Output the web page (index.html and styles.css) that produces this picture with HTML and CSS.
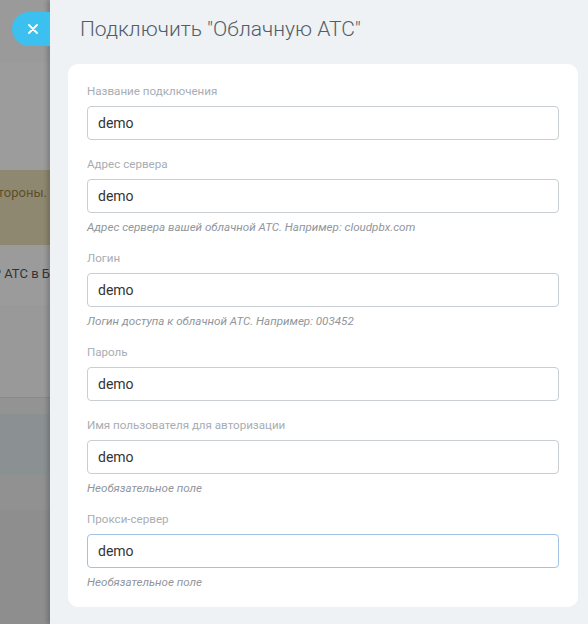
FILE: index.html
```html
<!DOCTYPE html>
<html lang="ru">
<head>
<meta charset="utf-8">
<title>Подключить "Облачную АТС"</title>
<link rel="stylesheet" href="styles.css">
</head>
<body>
<div class="page">
  <div class="backdrop">
    <div class="bd-top"></div>
    <div class="bd-a"></div>
    <div class="bd-alert"><span class="bd-alert-text">тороны.</span></div>
    <div class="bd-b"><span class="bd-text">IP АТС в Б</span></div>
    <div class="bd-c"></div>
    <div class="bd-line"></div>
    <div class="bd-d"></div>
    <div class="bd-e"></div>
    <div class="bd-f"></div>
    <div class="bd-g"></div>
  </div>
  <div class="panel">
    <button class="close" type="button" aria-label="Закрыть">
      <svg width="10" height="10" viewBox="0 0 10 10"><path d="M1 1L9 9M9 1L1 9" stroke="#fff" stroke-width="1.8" stroke-linecap="round"/></svg>
    </button>
    <h1 class="title">Подключить "Облачную АТС"</h1>
    <form class="card">
      <div class="field">
        <label class="label">Название подключения</label>
        <div class="input">demo</div>
      </div>
      <div class="field field-hinted">
        <label class="label">Адрес сервера</label>
        <div class="input">demo</div>
        <div class="hint">Адрес сервера вашей облачной АТС. Например: cloudpbx.com</div>
      </div>
      <div class="field field-hinted">
        <label class="label">Логин</label>
        <div class="input">demo</div>
        <div class="hint">Логин доступа к облачной АТС. Например: 003452</div>
      </div>
      <div class="field">
        <label class="label">Пароль</label>
        <div class="input">demo</div>
      </div>
      <div class="field field-hinted">
        <label class="label">Имя пользователя для авторизации</label>
        <div class="input">demo</div>
        <div class="hint">Необязательное поле</div>
      </div>
      <div class="field field-last">
        <label class="label">Прокси-сервер</label>
        <div class="input input-focus">demo</div>
        <div class="hint">Необязательное поле</div>
      </div>
    </form>
  </div>
</div>
</body>
</html>
```
FILE: styles.css
```css
* { box-sizing: border-box; }
html, body { margin: 0; padding: 0; }
body {
  width: 588px;
  height: 624px;
  overflow: hidden;
  font-family: Roboto, "Open Sans", "Liberation Sans", sans-serif;
  background: #eef2f4;
}
.page {
  display: flex;
  height: 624px;
}
.backdrop {
  width: 50px;
  flex: none;
  display: flex;
  flex-direction: column;
  overflow: hidden;
  background: #8e8e8e;
}
.bd-top { height: 62px; background: #9a9a9a; }
.bd-a { height: 108px; background: #9c9c9c; }
.bd-alert {
  height: 75px;
  background: #8f8870;
  display: flex;
  justify-content: flex-end;
  align-items: flex-start;
  padding-top: 15px;
  padding-right: 3px;
}
.bd-alert-text {
  white-space: nowrap;
  font-size: 13px;
  color: #5e4f28;
}
.bd-b {
  height: 60px;
  background: #9b9b9b;
  display: flex;
  justify-content: flex-end;
  padding-top: 21px;
}
.bd-text {
  white-space: nowrap;
  font-size: 13px;
  color: #333;
}
.bd-c { height: 92px; background: #999; }
.bd-line { height: 1px; background: #8a8a8a; }
.bd-d { height: 16px; background: #939393; }
.bd-e { height: 61px; background: #8b9193; }
.bd-f { height: 35px; background: #919191; }
.bd-g { flex: 1; background: #8e8e8e; }

.panel {
  position: relative;
  flex: 1;
  background: #eef2f4;
  padding: 0 10px 0 18px;
  box-shadow: -3px 0 4px rgba(0,0,0,0.18);
}
.close {
  position: absolute;
  left: -38px;
  top: 12px;
  width: 38px;
  height: 34px;
  border: 0;
  padding: 0 0 0 4px;
  border-radius: 17px 0 0 17px;
  background: #3bc0ef;
  display: flex;
  align-items: center;
  justify-content: center;
  cursor: pointer;
}
.title {
  margin: 0 0 0 12px;
  height: 64px;
  padding-top: 14px;
  font-size: 21px;
  line-height: 30px;
  font-weight: 300;
  color: #535c69;
  white-space: nowrap;
}
.card {
  background: #fff;
  border-radius: 10px;
  padding: 18px 19px 16px;
  display: flex;
  flex-direction: column;
}
.field {
  display: flex;
  flex-direction: column;
  margin-bottom: 15px;
}
.field-hinted { margin-bottom: 13px; }
.field-last { margin-bottom: 0; }
.label {
  font-size: 11.6px;
  line-height: 18px;
  color: #a8adb3;
  margin-bottom: 6px;
}
.input {
  height: 34px;
  border: 1px solid #c9ced3;
  border-radius: 4px;
  padding: 0 9px 0 10px;
  font-size: 14px;
  line-height: 32px;
  color: #333;
}
.input-focus {
  border-color: #a3c2e3;
}
.hint {
  margin-top: 5px;
  font-size: 11.6px;
  line-height: 18px;
  font-style: italic;
  color: #90969c;
}
```
